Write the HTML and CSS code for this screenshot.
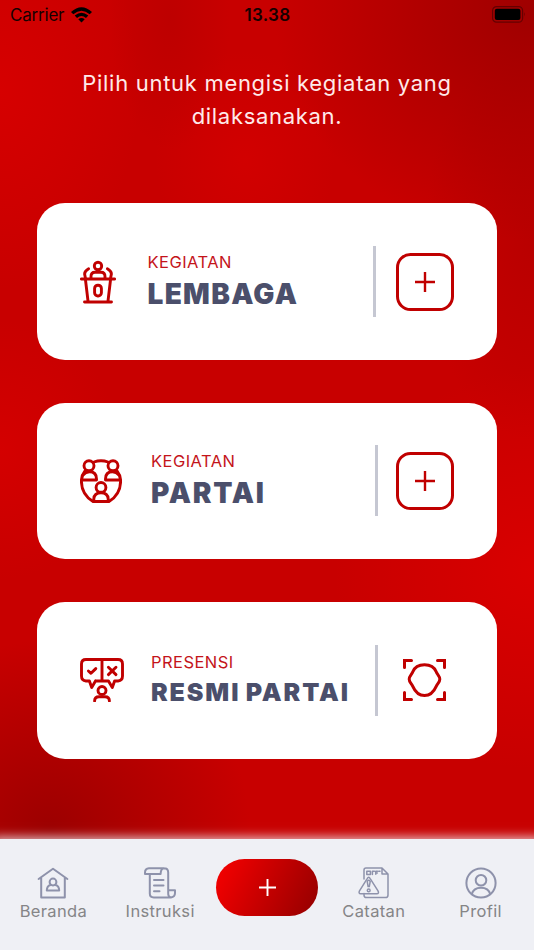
FILE: index.html
```html
<!DOCTYPE html>
<html lang="id">
  <head>
    <meta charset="UTF-8" />
    <meta name="viewport" content="width=device-width, initial-scale=1.0" />
    <title>Kegiatan</title>
    <link rel="stylesheet" href="styles.css">
  </head>

  <body>
    <div class="status-bar">
      <div class="carrier">
        <span>Carrier</span>
        <svg class="wifi" viewBox="0 0 21 16">
          <path d="M0 5 Q10.5 -4.4 21 5 L18.7 7.3 Q10.5 0 2.3 7.3 Z" />
          <path d="M3.7 8.6 Q10.5 2.8 17.3 8.6 L15 10.9 Q10.5 7 6 10.9 Z" />
          <path d="M7.3 12.2 Q10.5 9.6 13.7 12.2 L10.5 15.6 Z" />
        </svg>
      </div>
      <div class="clock">13.38</div>
      <div class="power">
        <svg class="battery" viewBox="0 0 35 17">
          <rect class="shell" x="0.6" y="0.6" width="30" height="15.6" rx="4" />
          <rect x="2.8" y="2.8" width="25.6" height="11.2" rx="2" />
          <path class="tip" d="M32.2 6 Q34 8.4 32.2 10.8 Z" />
        </svg>
      </div>
    </div>

    <main class="content">
      <h1 class="intro">Pilih untuk mengisi kegiatan yang<br />dilaksanakan.</h1>

      <div class="card lembaga">
        <svg class="card-icon" viewBox="0 0 36 44">
          <circle cx="18" cy="6" r="3.7" />
          <path d="M11 18 V16.5 Q11 12.2 15 12.2 H21 Q25 12.2 25 16.5 V18" />
          <path d="M8.6 8.8 Q4.6 11 4.6 14 L5.4 18 M27.4 8.8 Q31.4 11 31.4 14 L30.6 18" />
          <path d="M1.4 19 H34.6 M5.5 20 L8 41 M30.5 20 L28 41 M4.5 42 H31.5" />
          <rect x="14.6" y="25.2" width="6.8" height="10.8" rx="3.2" />
        </svg>
        <div class="label">
          <span class="kind">KEGIATAN</span>
          <strong class="name">LEMBAGA</strong>
        </div>
        <div class="divider"></div>
        <button class="add">
          <svg viewBox="0 0 20 20"><path d="M10 0 V20 M0 10 H20" /></svg>
        </button>
      </div>

      <div class="card partai">
        <svg class="card-icon" viewBox="0 0 42 44">
          <circle cx="9" cy="6.7" r="5" />
          <circle cx="33" cy="6.7" r="5" />
          <path d="M14 3 Q21 0.4 28 3" />
          <path d="M5 12 Q1.4 16.5 1.4 22 Q1.4 35.5 13 42.5 H29 Q40.6 35.5 40.6 22 Q40.6 16.5 37 12" />
          <path d="M2 21 H16.5 V20 Q16.5 12.8 9.5 12.8 Q5.4 12.8 3.2 16" />
          <path d="M40 21 H25.5 V20 Q25.5 12.8 32.5 12.8 Q36.6 12.8 38.8 16" />
          <circle cx="21" cy="28.4" r="4.9" />
          <path d="M13.8 42 V40 Q14.2 33.8 21 33.8 Q27.8 33.8 28.2 40 V42" />
        </svg>
        <div class="label">
          <span class="kind">KEGIATAN</span>
          <strong class="name">PARTAI</strong>
        </div>
        <div class="divider"></div>
        <button class="add">
          <svg viewBox="0 0 20 20"><path d="M10 0 V20 M0 10 H20" /></svg>
        </button>
      </div>

      <div class="card resmi">
        <svg class="card-icon" viewBox="0 0 44 44">
          <path d="M15.5 23 H28.5 L32.3 29.5 L34.6 23 H38 Q42.5 22.5 42.5 18 V6 Q42.5 1.5 38 1.5 H6 Q1.5 1.5 1.5 6 V18 Q1.5 22.5 6 23 H9.4 L11.7 29.5 L15.5 23 M22 2 V23" />
          <path d="M8.4 13 L11 15.3 L15.8 10.6 M28.4 9.2 L36 16.6 M36 9.2 L28.4 16.6" />
          <circle cx="22" cy="32.5" r="4" />
          <path d="M14.6 43 Q14.6 38.8 19 38.8 H25 Q29.4 38.8 29.4 43" />
        </svg>
        <div class="label">
          <span class="kind">PRESENSI</span>
          <strong class="name">RESMI PARTAI</strong>
        </div>
        <div class="divider"></div>
        <button class="scan">
          <svg viewBox="0 0 43 42">
            <path d="M1.5 8.5 V1.5 H8.5 M34.5 1.5 H41.5 V8.5 M1.5 33.5 V40.5 H8.5 M34.5 40.5 H41.5 V33.5" />
            <path d="M21.5 5.8 C27.5 5.8 31.5 8.5 33.2 12.8 C34.2 15.5 36.8 17 36.8 20.2 C36.8 23.2 34.6 24.2 33.2 27.4 C31 32.5 27.5 36.5 21.5 36.5 C15.5 36.5 12 32.5 9.8 27.4 C8.4 24.2 6.2 23.2 6.2 20.2 C6.2 17 8.8 15.5 9.8 12.8 C11.5 8.5 15.5 5.8 21.5 5.8 Z" />
          </svg>
        </button>
      </div>
    </main>

    <nav class="tab-bar">
      <a class="tab">
        <svg viewBox="0 0 32 32">
          <path d="M1.6 12 L16 1.8 L30.4 12 M4.2 11 V30.6 H27.8 V11" />
          <circle cx="16" cy="15" r="3.4" />
          <path d="M13.5 18 Q9.8 19 9.8 23.6 H22.2 Q22.2 19 18.5 18" />
        </svg>
        <span>Beranda</span>
      </a>
      <a class="tab">
        <svg viewBox="0 0 32 32">
          <path d="M5.8 7 V26.5 Q5.8 30.4 9.8 30.4 H27 Q31 30 31 26 V23.2 H24.2 V26 Q24 30 27 30.4 M24.2 23 V5.5 Q24.2 1.3 20 1.3 H5 Q1 1.6 1 5.5 V7 H16.6 Q16.8 1.5 20 1.3" />
          <path d="M10 13 H19.5 M10 18.6 H19.5 M10 24.3 H15.5" />
        </svg>
        <span>Instruksi</span>
      </a>
      <a class="tab">
        <span class="tab-add">
          <svg viewBox="0 0 16 16"><path d="M8 0 V16 M0 8 H16" /></svg>
        </span>
      </a>
      <a class="tab notes">
        <svg viewBox="0 0 32 32">
          <path d="M6 12 V3 Q6 1 8 1 H24 L30 7 V28 Q30 30.6 27.5 30.6 H8.5 Q6 30.6 6 28 V26.5 M24 1 V7 H30" />
          <path d="M8.8 4.2 H12.4 V7.6 H8.8 Z M14.4 7.6 V4.3 H16.4 M17.8 7.3 V4.3 H19.5 M20.8 4.3 H22 M18 6 H19.3" />
          <path d="M9.2 11.6 Q10.7 9 12.2 11.6 L20 23.8 Q21.4 26.7 18.8 26.7 H2.8 Q0.2 26.7 1.5 23.8 Z" />
          <path d="M9.2 14.4 Q10.7 12.2 12.2 14.4 L11.3 19.6 H10.1 Z" />
          <circle cx="10.7" cy="23.4" r="1.4" />
        </svg>
        <span>Catatan</span>
      </a>
      <a class="tab">
        <svg viewBox="0 0 32 32">
          <circle cx="16" cy="16" r="14.6" />
          <circle cx="16" cy="13.2" r="5.3" />
          <path d="M6.8 27.2 Q8.5 20.8 16 20.8 Q23.5 20.8 25.2 27.2" />
        </svg>
        <span>Profil</span>
      </a>
    </nav>
  </body>
</html>
```

FILE: styles.css
```css
* {
  box-sizing: border-box;
}

body {
  margin: 0;
  height: 950px;
  display: flex;
  flex-direction: column;
  overflow: hidden;
  font-family: Inter, "Liberation Sans", sans-serif;
  background:
    radial-gradient(ellipse 60px 130px at 170px 20px, rgba(165, 0, 0, 0.3), transparent),
    radial-gradient(ellipse 90px 110px at 245px 160px, rgba(216, 0, 0, 0.6), transparent),
    radial-gradient(ellipse 200px 190px at 50px 830px, rgba(145, 0, 0, 0.8), rgba(160, 0, 0, 0.55) 50%, transparent),
    radial-gradient(ellipse 260px 230px at 534px 10px, rgba(145, 0, 0, 0.75), transparent),
    radial-gradient(ellipse 110px 200px at 534px 240px, rgba(170, 0, 0, 0.5), transparent),
    radial-gradient(ellipse 140px 200px at 0 90px, #d60000, transparent),
    radial-gradient(ellipse 120px 130px at 0 450px, #d40000, transparent),
    radial-gradient(ellipse 200px 200px at 534px 570px, #d90000, transparent),
    #c80000;
}

button {
  padding: 0;
  background: none;
  border: none;
}

svg {
  display: block;
  fill: none;
}

.status-bar {
  height: 30px;
  padding: 0 7px 0 10px;
  display: grid;
  grid-template-columns: 1fr auto 1fr;
  align-items: center;
  font-size: 17px;
  color: #160000;
}

.carrier {
  display: flex;
  align-items: center;
  gap: 7px;
  letter-spacing: -0.2px;
}

.wifi {
  width: 21px;
  height: 16px;
  fill: #000;
}

.clock {
  margin-right: 2px;
  font-weight: 600;
  letter-spacing: 0.3px;
}

.power {
  display: flex;
  justify-content: flex-end;
}

.battery {
  width: 35px;
  height: 17px;
  margin-top: -1px;
  fill: #000;
}

.battery .shell {
  fill: none;
  stroke: #650000;
  stroke-width: 1.2;
}

.battery .tip {
  fill: #650000;
}

.content {
  flex: 1;
  padding: 37px 37px 0;
  display: flex;
  flex-direction: column;
  gap: 43px;
}

.intro {
  margin: 0 0 27.4px;
  height: 66px;
  font-size: 22px;
  font-weight: 400;
  line-height: 33px;
  letter-spacing: 0.7px;
  text-align: center;
  white-space: nowrap;
  color: #ffeaea;
}

.card {
  height: 156.4px;
  padding: 0 43px;
  display: flex;
  align-items: center;
  background-color: #fff;
  border-radius: 28px;
}

.card-icon {
  width: 42px;
  height: 44px;
  stroke: #c00000;
  stroke-width: 2.9;
  stroke-linecap: round;
  stroke-linejoin: round;
}

.lembaga .card-icon {
  width: 36px;
}

.resmi .card-icon {
  width: 44px;
}

.label {
  margin-left: 31.5px;
  padding-top: 2px;
  display: flex;
  flex-direction: column;
  white-space: nowrap;
}

.partai .label {
  margin-left: 29px;
}

.resmi .label {
  margin-left: 27px;
}

.kind {
  font-size: 16.5px;
  font-weight: 400;
  line-height: 22px;
  letter-spacing: 0.45px;
  color: #c4141a;
}

.name {
  margin-top: 1px;
  font-size: 28px;
  font-weight: 900;
  line-height: 41px;
  letter-spacing: 1.3px;
  color: #4b4f6b;
}

.partai .name {
  letter-spacing: 1.8px;
}

.resmi .name {
  font-size: 25px;
  line-height: 37px;
  letter-spacing: 1.9px;
  word-spacing: -1.5px;
}

.divider {
  width: 3px;
  height: 71px;
  margin: 0 18.5px 0 auto;
  background-color: #c5c7d2;
}

.lembaga .divider {
  margin-right: 20.5px;
}

.add,
.scan {
  width: 58px;
  height: 58px;
  display: flex;
  align-items: center;
  justify-content: center;
}

.add {
  border: 3px solid #c00000;
  border-radius: 14.5px;
}

.add svg {
  width: 20px;
  height: 20px;
  stroke: #c00000;
  stroke-width: 2.4;
}

.scan svg {
  width: 43px;
  height: 42px;
  margin-right: 1px;
  stroke: #c00000;
  stroke-width: 3;
  stroke-linecap: round;
}

.tab-bar {
  height: 111.5px;
  display: grid;
  grid-template-columns: repeat(5, 1fr);
  background-color: #eff0f5;
  box-shadow: 0 6px 10px 8px rgba(239, 240, 245, 0.8);
}

.tab {
  padding-top: 28px;
  display: flex;
  flex-direction: column;
  align-items: center;
  font-size: 16.5px;
  font-weight: 400;
  line-height: 24px;
  letter-spacing: 0.35px;
  color: #858587;
}

.tab > svg {
  width: 32px;
  height: 32px;
  stroke: #8e92ab;
  stroke-width: 2;
  stroke-linejoin: round;
  stroke-linecap: round;
}

.notes > svg {
  stroke-width: 1.5;
}

.tab-add {
  width: 102px;
  height: 57px;
  margin-top: -8px;
  display: flex;
  align-items: center;
  justify-content: center;
  border-radius: 29px;
  background: linear-gradient(115deg, #f00000 8%, #9b0000 92%);
}

.tab-add svg {
  width: 17px;
  height: 17px;
  margin-left: 1px;
  stroke: #fff;
  stroke-width: 1.8;
}
```
